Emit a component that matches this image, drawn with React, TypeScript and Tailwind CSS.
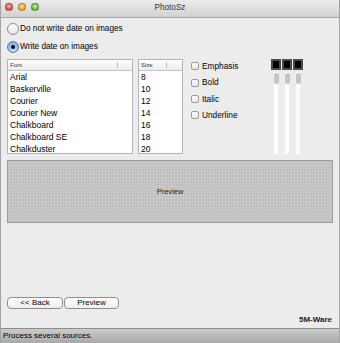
const fonts = ["Arial", "Baskerville", "Courier", "Courier New", "Chalkboard", "Chalkboard SE", "Chalkduster"];
const sizes = ["8", "10", "12", "14", "16", "18", "20"];
const styles = ["Emphasis", "Bold", "Italic", "Underline"];

function Light({ color }: { color: string }) {
  return <span className={`h-[8px] w-[8px] rounded-full border border-black/25 ${color}`} />;
}

function Radio({ checked, label }: { checked?: boolean; label: string }) {
  return (
    <div className="flex h-[18px] items-center">
      <span
        className={
          checked
            ? "flex h-[12px] w-[12px] items-center justify-center rounded-full border border-[#5a7fae] bg-[radial-gradient(circle_at_50%_70%,#d6e7fb,#7fb0e6_70%)]"
            : "h-[12px] w-[12px] rounded-full border border-[#8c8c8c] bg-[linear-gradient(#ffffff,#e4e4e4)]"
        }
      >
        {checked && <span className="h-[4px] w-[4px] rounded-full bg-black" />}
      </span>
      <span className="ml-[1px] text-[8.25px] text-black">{label}</span>
    </div>
  );
}

function ListBox({ title, items, width, divider }: { title: string; items: string[]; width: string; divider: string }) {
  return (
    <div className={`${width} h-[95px] overflow-hidden border border-[#b4b4b4] bg-white`}>
      <div className="relative flex h-[11px] items-center border-b border-[#c4c4c4] bg-[linear-gradient(#ffffff,#ececec)] pl-[2px] text-[6px] text-[#333]">
        {title}
        <span className={`absolute top-[2px] h-[6px] w-px bg-[#c0c0c0] ${divider}`} />
      </div>
      {items.map((it) => (
        <div key={it} className="flex h-[12px] items-center pl-[2px] text-[8.5px] text-black">
          {it}
        </div>
      ))}
    </div>
  );
}

function Slider() {
  return (
    <div className="flex w-[10px] flex-col items-center">
      <div className="h-[11px] w-[10px] border-2 border-[#4b4b4b] bg-black" />
      <div className="mt-[2px] flex h-[82px] w-[8px] justify-center bg-[linear-gradient(to_right,#e4e4e4,#fdfdfd_35%,#fdfdfd_65%,#e4e4e4)] pt-[1px]">
        <div className="h-[11px] w-[5px] rounded-full bg-[#c4c4c4]" />
      </div>
    </div>
  );
}

export default function App() {
  return (
    <div className="flex h-[343px] w-[340px] flex-col overflow-hidden border-x border-[#a2a2a2] bg-[#ececec] font-['Liberation_Sans',Arial,sans-serif]">
      <div className="relative flex h-[18px] shrink-0 items-center border-b border-[#a9a9a9] bg-[linear-gradient(#ebebeb,#d2d2d2)]">
        <div className="flex gap-[5px] pl-[4px] pb-[4px]">
          <Light color="bg-[radial-gradient(circle_at_50%_35%,#ffb0aa,#e2453f_75%)]" />
          <Light color="bg-[radial-gradient(circle_at_50%_35%,#ffe39a,#e3a224_75%)]" />
          <Light color="bg-[radial-gradient(circle_at_50%_35%,#c9f2a6,#5fb83a_75%)]" />
        </div>
        <div className="absolute inset-x-0 text-center text-[8.2px] text-[#333]">PhotoSz</div>
      </div>

      <div className="flex flex-1 flex-col px-[6px] pt-[2px]">
        <Radio label="Do not write date on images" />
        <Radio checked label="Write date on images" />

        <div className="mt-[3px] flex items-start">
          <ListBox title="Font" items={fonts} width="w-[126px]" divider="left-[109px]" />
          <div className="ml-[5px]">
            <ListBox title="Size" items={sizes} width="w-[45px]" divider="left-[27px]" />
          </div>
          <div className="ml-[8px] flex w-[80px] flex-col -mt-px">
            {styles.map((s) => (
              <div key={s} className="flex h-[16.4px] items-center">
                <span className="h-[8px] w-[8px] rounded-[2px] border border-[#9a9a9a] bg-[linear-gradient(#ffffff,#e6e6e6)]" />
                <span className="ml-[3px] text-[8.3px] text-black">{s}</span>
              </div>
            ))}
          </div>
          <div className="flex gap-[1px]">
            <Slider />
            <Slider />
            <Slider />
          </div>
        </div>

        <div className="mt-[6px] flex h-[63px] items-center justify-center border border-[#9c9c9c] bg-[#c2c2c2] bg-[radial-gradient(circle,#dadada_0.7px,transparent_1px)] bg-[length:3px_3px] text-[7.5px] text-[#222]">
          Preview
        </div>

        <div className="flex-1" />

        <div className="flex gap-[1px]">
          <button className="flex h-[12px] w-[56px] items-center justify-center rounded-[4px] border border-[#8e8e8e] bg-[linear-gradient(#ffffff,#eeeeee)] text-[8px] text-black">
            &lt;&lt; Back
          </button>
          <button className="flex h-[12px] w-[55px] items-center justify-center rounded-[4px] border border-[#8e8e8e] bg-[linear-gradient(#ffffff,#eeeeee)] text-[8px] text-black">
            Preview
          </button>
        </div>
        <div className="mt-[6px] mb-[3px] flex h-[10px] items-center justify-end pr-[1px] text-[8px] font-bold text-[#222]">
          5M-Ware
        </div>
      </div>

      <div className="flex h-[15px] shrink-0 items-center border-t border-[#8d8d8d] bg-[linear-gradient(#cbcbcb,#a9a9a9)] pl-[2px] text-[8px] text-black">
        Process several sources.
      </div>
    </div>
  );
}
